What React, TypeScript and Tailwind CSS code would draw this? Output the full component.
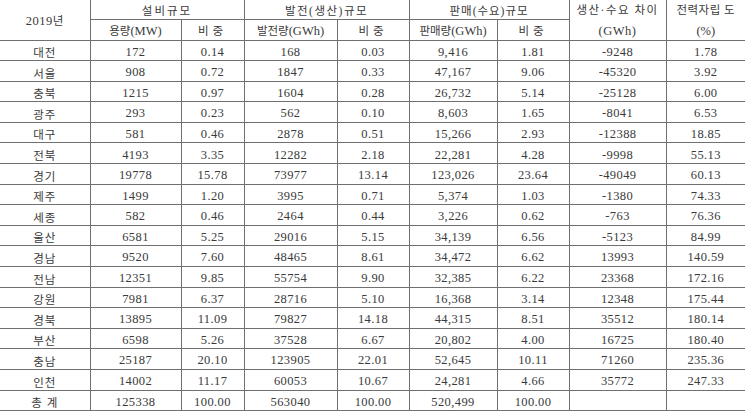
const ROWS: string[][] = [
  ["대전", "172", "0.14", "168", "0.03", "9,416", "1.81", "-9248", "1.78"],
  ["서울", "908", "0.72", "1847", "0.33", "47,167", "9.06", "-45320", "3.92"],
  ["충북", "1215", "0.97", "1604", "0.28", "26,732", "5.14", "-25128", "6.00"],
  ["광주", "293", "0.23", "562", "0.10", "8,603", "1.65", "-8041", "6.53"],
  ["대구", "581", "0.46", "2878", "0.51", "15,266", "2.93", "-12388", "18.85"],
  ["전북", "4193", "3.35", "12282", "2.18", "22,281", "4.28", "-9998", "55.13"],
  ["경기", "19778", "15.78", "73977", "13.14", "123,026", "23.64", "-49049", "60.13"],
  ["제주", "1499", "1.20", "3995", "0.71", "5,374", "1.03", "-1380", "74.33"],
  ["세종", "582", "0.46", "2464", "0.44", "3,226", "0.62", "-763", "76.36"],
  ["울산", "6581", "5.25", "29016", "5.15", "34,139", "6.56", "-5123", "84.99"],
  ["경남", "9520", "7.60", "48465", "8.61", "34,472", "6.62", "13993", "140.59"],
  ["전남", "12351", "9.85", "55754", "9.90", "32,385", "6.22", "23368", "172.16"],
  ["강원", "7981", "6.37", "28716", "5.10", "16,368", "3.14", "12348", "175.44"],
  ["경북", "13895", "11.09", "79827", "14.18", "44,315", "8.51", "35512", "180.14"],
  ["부산", "6598", "5.26", "37528", "6.67", "20,802", "4.00", "16725", "180.40"],
  ["충남", "25187", "20.10", "123905", "22.01", "52,645", "10.11", "71260", "235.36"],
  ["인천", "14002", "11.17", "60053", "10.67", "24,281", "4.66", "35772", "247.33"],
  ["총 계", "125338", "100.00", "563040", "100.00", "520,499", "100.00", "", ""],
];

const WIDTHS = ["w-[90px]", "w-[91px]", "w-[63px]", "w-[93px]", "w-[72px]", "w-[88px]", "w-[72px]", "w-[97px]", "w-[79px]"];

const cell = "border-[#707070] text-center align-middle p-0 font-normal";
const ko = "text-[11.5px] text-[#3a3a3a]";

export default function App() {
  return (
    <div
      className="w-[745px] h-[412px] overflow-hidden bg-white text-[#3a3a3a] text-[12.5px] leading-none"
      style={{ fontFamily: '"Liberation Serif", "Noto Sans CJK KR", serif' }}
    >
      <table className="w-[745px] table-fixed border-collapse">
        <colgroup>
          {WIDTHS.map((w, i) => (
            <col key={i} className={w} />
          ))}
        </colgroup>
        <thead>
          <tr className="h-[19.5px]">
            <th rowSpan={2} className={`${cell} pt-[3px] border-r border-b`}>
              <span className="tracking-[0.5px]">
                2019<span className={ko}>년</span>
              </span>
            </th>
            <th colSpan={2} className={`${cell} pt-[3px] border-r border-b`}>
              <span className={`${ko} tracking-[2px]`}>설비규모</span>
            </th>
            <th colSpan={2} className={`${cell} pt-[3px] border-r border-b`}>
              <span className={`${ko} tracking-[1.5px]`}>발전(생산)규모</span>
            </th>
            <th colSpan={2} className={`${cell} pt-[3px] border-r border-b`}>
              <span className={`${ko} tracking-[1px]`}>판매(수요)규모</span>
            </th>
            <th rowSpan={2} className={`${cell} pt-[3px] border-r border-b`}>
              <div className="flex flex-col items-center gap-[9px]">
                <span className={`${ko} tracking-[1.5px]`}>생산·수요 차이</span>
                <span className="tracking-[0.5px]">(GWh)</span>
              </div>
            </th>
            <th rowSpan={2} className={`${cell} pt-[3px] border-b`}>
              <div className="flex flex-col items-center gap-[9px]">
                <span className={`${ko} tracking-[0.5px]`}>전력자립 도</span>
                <span>(%)</span>
              </div>
            </th>
          </tr>
          <tr className="h-[20.5px]">
            <th className={`${cell} pt-[3px] border-r border-b`}>
              <span className={ko}>용량</span>(MW)
            </th>
            <th className={`${cell} pt-[3px] border-r border-b`}>
              <span className={`${ko} tracking-[4px]`}>비중</span>
            </th>
            <th className={`${cell} pt-[3px] border-r border-b`}>
              <span className={ko}>발전량</span>(GWh)
            </th>
            <th className={`${cell} pt-[3px] border-r border-b`}>
              <span className={`${ko} tracking-[4px]`}>비중</span>
            </th>
            <th className={`${cell} pt-[3px] border-r border-b`}>
              <span className={ko}>판매량</span>(GWh)
            </th>
            <th className={`${cell} pt-[3px] border-r border-b`}>
              <span className={`${ko} tracking-[4px]`}>비중</span>
            </th>
          </tr>
        </thead>
        <tbody>
          {ROWS.map((row) => (
            <tr key={row[0]} className="h-[20.6px]">
              {row.map((v, i) => (
                <td
                  key={i}
                  className={`${cell} border-b ${i < 8 ? "border-r" : ""} ${
                    i === 0 ? `${ko} pt-[7px] tracking-[1px]` : "pt-[3px] tracking-[0.4px]"
                  }`}
                >
                  {v}
                </td>
              ))}
            </tr>
          ))}
        </tbody>
      </table>
    </div>
  );
}
